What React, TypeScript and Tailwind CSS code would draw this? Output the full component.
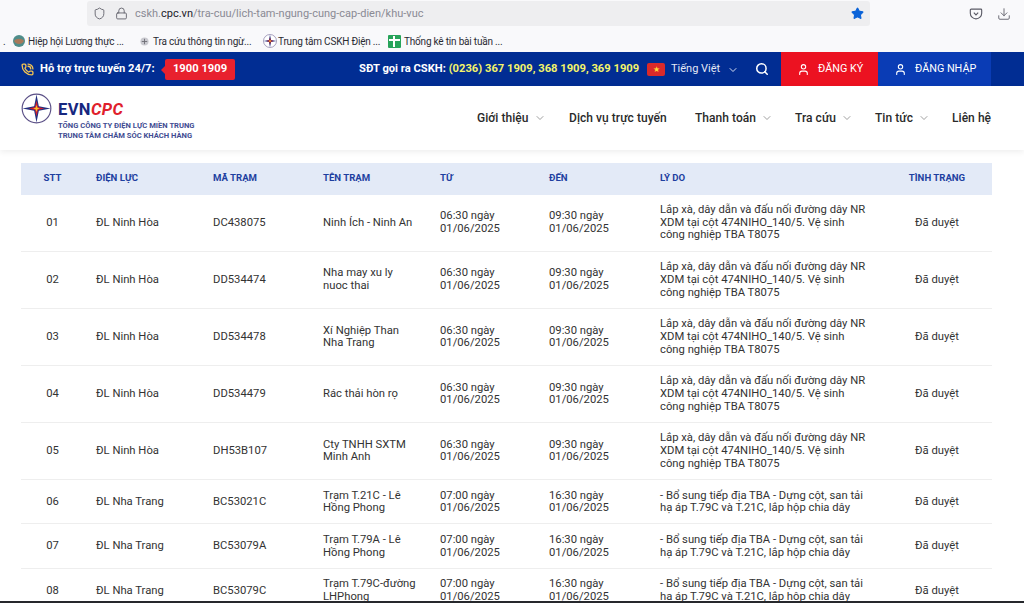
import { ChevronDown, Download, Lock, PhoneCall, Search, Shield, Star, User } from 'lucide-react';

const ninhHoaReason = 'Lắp xà, dây dẫn và đấu nối đường dây NR XDM tại cột 474NIHO_140/5. Vệ sinh công nghiệp TBA T8075';
const nhaTrangReason = '- Bổ sung tiếp địa TBA - Dựng cột, san tải hạ áp T.79C và T.21C, lắp hộp chia dây';

const rows = [
  { stt: '01', dl: 'ĐL Ninh Hòa', ma: 'DC438075', ten: 'Ninh Ích - Ninh An', tu: '06:30', den: '09:30', reason: ninhHoaReason },
  { stt: '02', dl: 'ĐL Ninh Hòa', ma: 'DD534474', ten: 'Nha may xu ly nuoc thai', tu: '06:30', den: '09:30', reason: ninhHoaReason },
  { stt: '03', dl: 'ĐL Ninh Hòa', ma: 'DD534478', ten: 'Xí Nghiệp Than Nha Trang', tu: '06:30', den: '09:30', reason: ninhHoaReason },
  { stt: '04', dl: 'ĐL Ninh Hòa', ma: 'DD534479', ten: 'Rác thải hòn rọ', tu: '06:30', den: '09:30', reason: ninhHoaReason },
  { stt: '05', dl: 'ĐL Ninh Hòa', ma: 'DH53B107', ten: 'Cty TNHH SXTM Minh Anh', tu: '06:30', den: '09:30', reason: ninhHoaReason },
  { stt: '06', dl: 'ĐL Nha Trang', ma: 'BC53021C', ten: 'Trạm T.21C - Lê Hồng Phong', tu: '07:00', den: '16:30', reason: nhaTrangReason },
  { stt: '07', dl: 'ĐL Nha Trang', ma: 'BC53079A', ten: 'Trạm T.79A - Lê Hồng Phong', tu: '07:00', den: '16:30', reason: nhaTrangReason },
  { stt: '08', dl: 'ĐL Nha Trang', ma: 'BC53079C', ten: 'Trạm T.79C-đường LHPhong', tu: '07:00', den: '16:30', reason: nhaTrangReason },
];

function EvnMark({ className }: { className: string }) {
  return (
    <svg viewBox="0 0 32 32" className={className}>
      <circle cx="16" cy="16" r="14.8" fill="#fff" stroke="#5a4f86" strokeWidth="1.2" />
      <path d="M16 1.5 18.4 13.6 30.5 16 18.4 18.4 16 30.5 13.6 18.4 1.5 16 13.6 13.6Z" fill="#23307f" />
      <path d="M16 8 17.6 14.4 24 16 17.6 17.6 16 24 14.4 17.6 8 16 14.4 14.4Z" fill="#d3202f" />
      <path d="M16 12.5 16.9 15.1 19.5 16 16.9 16.9 16 19.5 15.1 16.9 12.5 16 15.1 15.1Z" fill="#f6c52c" />
    </svg>
  );
}

function Bookmarks() {
  return (
    <div className="flex h-[26px] items-center pt-[4px] text-[10px] tracking-[-0.2px] text-[#2b2b33]">
      <span className="ml-[3px] w-[10px]">.</span>
      <svg viewBox="0 0 12 12" className="h-3 w-3 shrink-0">
        <circle cx="6" cy="6" r="6" fill="#4f8d8a" />
        <path d="M1 6c2-3 8-3 10 0-2 4-8 4-10 0Z" fill="#a9795a" />
      </svg>
      <span className="ml-[3px] w-[112px] shrink-0 whitespace-nowrap">Hiệp hội Lương thực ...</span>
      <svg viewBox="0 0 10 10" className="h-[9px] w-[9px] shrink-0">
        <circle cx="5" cy="5" r="4.5" fill="#c9c9cf" />
        <path d="M5 2v6M2 5h6" stroke="#6d6d75" strokeWidth="1" />
      </svg>
      <span className="ml-[4px] w-[110px] shrink-0 whitespace-nowrap">Tra cứu thông tin ngừ...</span>
      <EvnMark className="h-[14px] w-[14px] shrink-0" />
      <span className="ml-[1px] w-[110px] shrink-0 whitespace-nowrap">Trung tâm CSKH Điện ...</span>
      <span className="relative h-[13px] w-[13px] shrink-0 rounded-[1px] bg-[#27a35a]">
        <span className="absolute left-[5px] top-[1px] h-[11px] w-[2px] bg-white" />
        <span className="absolute left-[1px] top-[4px] h-[2px] w-[11px] bg-white" />
      </span>
      <span className="ml-[3px] whitespace-nowrap">Thống kê tin bài tuần ...</span>
    </div>
  );
}

function BrowserBar() {
  return (
    <div className="h-[52px] shrink-0 bg-[#f9f9fb]">
      <div className="flex h-[26px] items-center pt-px">
        <div className="ml-[87px] flex h-[25px] w-[783px] items-center rounded-[3px] bg-[#eeeef0] text-[#5b5b66]">
          <Shield className="ml-[6px] h-[13px] w-[13px]" strokeWidth={1.6} />
          <Lock className="ml-[9px] h-[13px] w-[13px]" strokeWidth={1.6} />
          <span className="ml-[7px] pt-[2px] text-[11px] text-[#8a8a94]">
            cskh.<span className="text-[#20202a]">cpc.vn</span>/tra-cuu/lich-tam-ngung-cung-cap-dien/khu-vuc
          </span>
          <Star className="ml-auto mr-[6px] h-[13px] w-[13px] fill-[#0b63d8] text-[#0b63d8]" />
        </div>
        <svg viewBox="0 0 16 16" className="ml-[99px] h-[14px] w-[14px] text-[#5b5b66]" fill="none" stroke="currentColor" strokeWidth="1.3">
          <path d="M2.5 2.5h11a1 1 0 0 1 1 1V7a6.5 6.5 0 0 1-13 0V3.500a1 1 0 0 1 1-1Z" />
          <path d="m5.500 6.500 2.500 2.500 2.500-2.500" />
        </svg>
        <Download className="ml-[14px] h-[14px] w-[14px] text-[#5b5b66]" strokeWidth={1.5} />
      </div>
      <Bookmarks />
    </div>
  );
}

function TopBar() {
  return (
    <div className="flex h-[34px] shrink-0 items-center bg-[#012d93] pt-[1px] text-[11.2px] text-white">
      <PhoneCall className="ml-[21px] h-[13px] w-[13px] text-[#f5c451]" strokeWidth={2.4} />
      <span className="ml-[6px] w-[115px] shrink-0 whitespace-nowrap font-bold">Hỗ trợ trực tuyến 24/7:</span>
      <span className="relative ml-[10px] flex h-[21px] w-[70px] shrink-0 items-center justify-center rounded-[2px] bg-[#e8212e] font-bold">
        <span className="absolute left-[-4px] top-[7px] h-0 w-0 border-y-[4px] border-r-[4px] border-y-transparent border-r-[#e8212e]" />
        1900 1909
      </span>
      <span className="ml-[124px] w-[280px] shrink-0 whitespace-nowrap font-bold">
        SĐT gọi ra CSKH: <span className="text-[#f4f46a]">(0236) 367 1909, 368 1909, 369 1909</span>
      </span>
      <span className="ml-[8px] flex h-[13px] w-[18px] shrink-0 items-center justify-center rounded-[2px] bg-[#da2a2a] text-[8px] leading-none text-[#ffd93a]">★</span>
      <span className="ml-[6px] w-[49px] shrink-0 whitespace-nowrap text-[11px] text-[#e4e9f6]">Tiếng Việt</span>
      <ChevronDown className="ml-[7px] h-[12px] w-[12px] shrink-0 text-[#d5dcf0]" />
      <Search className="-mt-[1px] ml-[16px] h-[14px] w-[14px] shrink-0" strokeWidth={2.6} />
      <div className="-mt-[1px] ml-[12px] flex h-[34px] w-[97px] shrink-0 items-center bg-[#ec1221] pl-[16px]">
        <User className="h-[13px] w-[13px]" />
        <span className="ml-[8px] whitespace-nowrap text-[10.8px]">ĐĂNG KÝ</span>
      </div>
      <div className="-mt-[1px] flex h-[34px] w-[113px] shrink-0 items-center bg-[#0a3cb5] pl-[16px]">
        <User className="h-[13px] w-[13px]" />
        <span className="ml-[8px] whitespace-nowrap text-[10.8px]">ĐĂNG NHẬP</span>
      </div>
    </div>
  );
}

function NavItem({ label, width, caret }: { label: string; width: string; caret?: boolean }) {
  return (
    <div className={`flex shrink-0 items-center ${width}`}>
      <span className="whitespace-nowrap">{label}</span>
      {caret ? <ChevronDown className="ml-[5px] h-[12px] w-[12px] text-[#777]" strokeWidth={1.4} /> : null}
    </div>
  );
}

function Header() {
  return (
    <div className="relative z-10 flex h-[64px] shrink-0 bg-white shadow-[0_2px_6px_rgba(0,0,0,0.07)]">
      <div className="ml-[21px] flex w-[456px] shrink-0 items-start pt-[7px]">
        <EvnMark className="h-[31px] w-[31px] shrink-0" />
        <div className="ml-[6px] pt-[9px]">
          <div className="text-[16.5px] font-bold leading-[16px] tracking-[0.4px] text-[#17277f]">
            EVN<span className="italic text-[#e0202c]">CPC</span>
          </div>
          <div className="mt-[3px] whitespace-nowrap text-[7.6px] font-bold leading-[10px] text-[#414c92]">TỔNG CÔNG TY ĐIỆN LỰC MIỀN TRUNG</div>
          <div className="whitespace-nowrap text-[7.6px] font-bold leading-[10px] text-[#414c92]">TRUNG TÂM CHĂM SÓC KHÁCH HÀNG</div>
        </div>
      </div>
      <div className="flex items-center text-[12px] font-medium tracking-[0.05px] text-[#2a2a2a]">
        <NavItem label="Giới thiệu" width="w-[92px]" caret />
        <NavItem label="Dịch vụ trực tuyến" width="w-[126px]" />
        <NavItem label="Thanh toán" width="w-[100px]" caret />
        <NavItem label="Tra cứu" width="w-[80px]" caret />
        <NavItem label="Tin tức" width="w-[77px]" caret />
        <NavItem label="Liên hệ" width="w-[40px]" />
      </div>
    </div>
  );
}

function Table() {
  const th = 'px-3 text-left text-[9.6px] font-bold text-[#1e3fa0]';
  const td = 'border-b border-[#eeeeee] px-3 pt-[9.5px] pb-[8.5px] align-middle';
  return (
    <div className="min-h-0 flex-1 overflow-hidden bg-white pl-[21px] pt-[13px]">
      <table className="w-[971px] table-fixed border-separate border-spacing-0 text-[11.25px] leading-[12.7px] text-[#333]">
        <colgroup>
          <col className="w-[63px]" />
          <col className="w-[117px]" />
          <col className="w-[110px]" />
          <col className="w-[117px]" />
          <col className="w-[109px]" />
          <col className="w-[111px]" />
          <col className="w-[234px]" />
          <col className="w-[110px]" />
        </colgroup>
        <thead>
          <tr className="h-[31.5px] bg-[#e3eaf7]">
            <th className="px-0 text-center text-[9.6px] font-bold text-[#1e3fa0]">STT</th>
            <th className={th}>ĐIỆN LỰC</th>
            <th className={th}>MÃ TRẠM</th>
            <th className={th}>TÊN TRẠM</th>
            <th className={th}>TỪ</th>
            <th className={th}>ĐẾN</th>
            <th className={th}>LÝ DO</th>
            <th className="px-0 text-center text-[9.6px] font-bold text-[#1e3fa0]">TÌNH TRẠNG</th>
          </tr>
        </thead>
        <tbody>
          {rows.map((r) => (
            <tr key={r.stt}>
              <td className={`${td} px-0 text-center`}>{r.stt}</td>
              <td className={td}>{r.dl}</td>
              <td className={td}>{r.ma}</td>
              <td className={td}>{r.ten}</td>
              <td className={td}>
                {r.tu} ngày
                <br />
                01/06/2025
              </td>
              <td className={td}>
                {r.den} ngày
                <br />
                01/06/2025
              </td>
              <td className={td}>{r.reason}</td>
              <td className={`${td} px-0 text-center`}>Đã duyệt</td>
            </tr>
          ))}
        </tbody>
      </table>
    </div>
  );
}

export default function App() {
  return (
    <div className="flex h-[603px] w-[1024px] flex-col overflow-hidden bg-white font-['Roboto',sans-serif]">
      <BrowserBar />
      <TopBar />
      <Header />
      <Table />
      <div className="h-[2px] shrink-0 bg-[#26282c]" />
    </div>
  );
}
